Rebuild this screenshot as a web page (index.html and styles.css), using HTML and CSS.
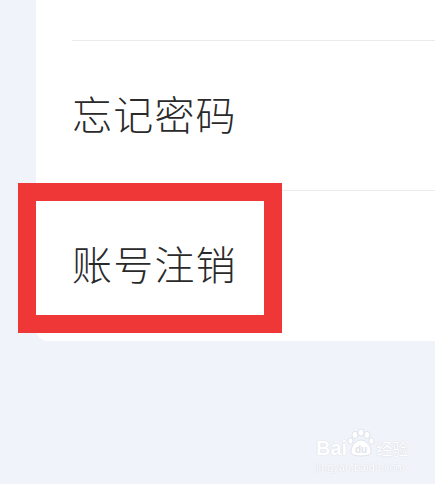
FILE: index.html
```html
<!DOCTYPE html>
<html lang="zh-CN">
<head>
    <meta charset="UTF-8">
    <meta name="viewport" content="width=device-width, initial-scale=1.0">
    <title>设置</title>
    <link rel="stylesheet" href="styles.css">
</head>
<body>
    <div class="card">
        <div class="row row-top"></div>
        <div class="row">忘记密码</div>
        <div class="row">账号注销</div>
    </div>

    <!-- 标注框 -->
    <div class="mark"></div>

    <!-- 水印 -->
    <div class="watermark">
        <div class="wm-logo">
            <span class="wm-bai">Bai</span>
            <svg class="wm-paw" width="30" height="30" viewBox="0 0 30 30">
                <g fill="#fff" stroke="#dfe3eb" stroke-width="1">
                    <ellipse cx="9" cy="7" rx="3" ry="3.6"/>
                    <ellipse cx="15" cy="4.5" rx="3" ry="3.6"/>
                    <ellipse cx="21" cy="7" rx="3" ry="3.6"/>
                    <ellipse cx="4.5" cy="13" rx="2.6" ry="3.2"/>
                    <ellipse cx="25.5" cy="13" rx="2.6" ry="3.2"/>
                    <path d="M15 12 C9 12 4 20 5 25 C6 29 24 29 25 25 C26 20 21 12 15 12 Z"/>
                </g>
                <text x="15" y="25" font-family="Liberation Sans, sans-serif" font-size="10" font-weight="bold" fill="#dfe3eb" text-anchor="middle">du</text>
            </svg>
            <span class="wm-cn">经验</span>
        </div>
        <div class="wm-url">jingyan.baidu.com</div>
    </div>
</body>
</html>
```

FILE: styles.css
```css
body {
    margin: 0;
    background-color: #f0f3fa;
    font-family: "Noto Sans CJK SC", "Noto Sans", sans-serif;
    width: 435px;
    height: 484px;
    overflow: hidden;
    position: relative;
}
.card {
    margin-left: 36px;
    width: 420px;
    background-color: #fff;
    border-radius: 0 0 0 12px;
}
.row {
    margin-left: 36px;
    height: 149px;
    padding-bottom: 6px;
    box-sizing: content-box;
    border-top: 1px solid #ebebeb;
    display: flex;
    align-items: center;
    font-size: 40px;
    font-weight: 300;
    letter-spacing: 1.2px;
    color: #2a2a2a;
}
.row:not(.row-top) {
    height: 143px;
}
.row:last-child {
    height: 144px;
}
.row-top {
    height: 40px;
    padding-bottom: 0;
    border-top: none;
}
.mark {
    position: absolute;
    left: 18px;
    top: 183px;
    width: 264px;
    height: 150px;
    box-sizing: border-box;
    border: 18px solid #ef3737;
}
.watermark {
    position: absolute;
    left: 316px;
    top: 428px;
    width: 96px;
    color: #fff;
}
.wm-logo {
    display: flex;
    align-items: flex-end;
    height: 30px;
}
.wm-bai {
    font-family: "Liberation Sans", sans-serif;
    font-weight: bold;
    font-size: 20px;
    line-height: 20px;
    color: #fff;
    text-shadow: 0 0 1px #d3d8e2, 0 0 1px #d3d8e2;
}
.wm-paw {
    margin-left: -1px;
}
.wm-cn {
    font-size: 16px;
    line-height: 20px;
    color: #fff;
    text-shadow: 0 0 1px #d3d8e2, 0 0 1px #d3d8e2;
}
.wm-url {
    font-family: "Liberation Sans", sans-serif;
    font-size: 11px;
    margin-top: 3px;
    color: #fff;
    text-shadow: 0 0 1px #d3d8e2, 0 0 1px #d3d8e2;
}
```
